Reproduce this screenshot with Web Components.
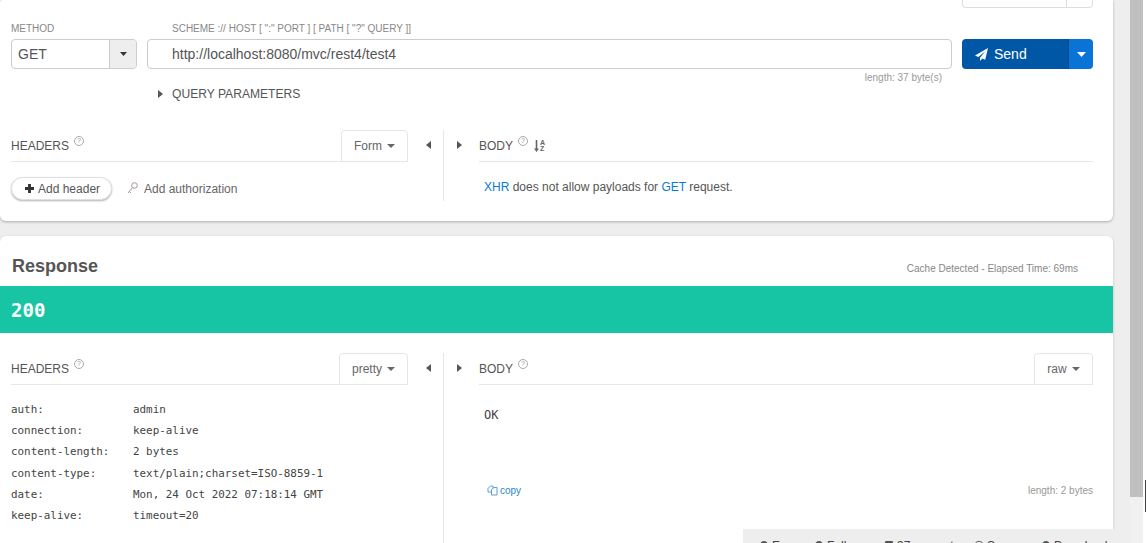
<!DOCTYPE html>
<html>
<head>
<meta charset="utf-8">
<title>API Tester</title>
<style>
html,body{margin:0;padding:0;height:100%;overflow:hidden;background:#fff;}
body{font-family:"Liberation Sans",Arial,sans-serif;color:#555;}
</style>
</head>
<body>
<api-app>
    <request-card></request-card>
    <response-card></response-card>
</api-app>

<script>
const caret = (w, h, color) => `<svg width="${w}" height="${h}" viewBox="0 0 8 4" preserveAspectRatio="none" style="display:block"><path d="M0 0h8L4 4z" fill="${color}"/></svg>`

class ApiApp extends HTMLElement{
    constructor(){
        super()
        this.attachShadow({mode: 'open'})
        this.shadowRoot.innerHTML = `
            <style>
                :host{display:flex;height:543px;width:1146px;overflow:hidden;position:relative;}
                #main{width:1130px;height:543px;background:#eee;overflow:hidden;flex:none;}
                #track{width:13px;background:#f1f1f1;flex:none;}
                #thumb{height:497px;background:#c0c0c0;}
                #edge{flex:1;background:#fff;}
                #mark{position:absolute;right:0;top:480px;width:1px;height:32px;background:#444;}
            </style>
            <div id="main"><slot></slot></div>
            <div id="track"><div id="thumb"></div></div>
            <div id="edge"></div>
            <div id="mark"></div>
            <status-bar></status-bar>
        `
    }
}

class HelpMark extends HTMLElement{
    constructor(){
        super()
        this.attachShadow({mode: 'open'})
        this.shadowRoot.innerHTML = `
            <style>
                :host{display:inline-flex;width:10px;height:10px;box-sizing:border-box;border:1px solid #aaa;border-radius:50%;
                    align-items:center;justify-content:center;font:7px/8px "Liberation Sans",sans-serif;color:#999;
                    position:relative;top:-5px;margin-left:5px;}
            </style>?
        `
    }
}

class Arrow extends HTMLElement{
    constructor(){
        super()
        this.attachShadow({mode: 'open'})
        const left = this.hasAttribute('left')
        this.shadowRoot.innerHTML = `
            <style>:host{display:block;width:5px;height:8px;line-height:0;}</style>
            <svg width="5" height="8" viewBox="0 0 5 8"><path d="${left ? 'M5 0v8L0 4z' : 'M0 0v8l5-4z'}" fill="#555"/></svg>
        `
    }
}

class PaneHead extends HTMLElement{
    constructor(){
        super()
        this.attachShadow({mode: 'open'})
        this.shadowRoot.innerHTML = `
            <style>
                :host{display:flex;align-items:stretch;height:32px;box-sizing:border-box;border-bottom:1px solid #e6e6e6;}
                #title{display:flex;align-items:center;font-size:12px;color:#555;flex:1;padding-top:1px;}
            </style>
            <div id="title"><span></span><help-mark></help-mark><slot name="extra"></slot></div>
            <slot name="tool"></slot>
        `
    }
    connectedCallback(){
        this.shadowRoot.querySelector('span').textContent = this.getAttribute('title')
    }
}

class TabPick extends HTMLElement{
    constructor(){
        super()
        this.attachShadow({mode: 'open'})
        this.shadowRoot.innerHTML = `
            <style>
                :host{display:flex;align-items:center;justify-content:center;gap:5px;box-sizing:border-box;height:32px;
                    border:1px solid #e6e6e6;border-bottom:1px solid #e6e6e6;border-radius:4px 4px 0 0;
                    font-size:12px;color:#666;}
            </style>
            <slot></slot>${caret(8, 4, '#666')}
        `
    }
}

class SplitPane extends HTMLElement{
    constructor(){
        super()
        this.attachShadow({mode: 'open'})
        this.shadowRoot.innerHTML = `
            <style>
                :host{display:flex;padding-left:11px;box-sizing:border-box;}
                #left{width:397px;flex:none;}
                #mid{width:71px;flex:none;display:flex;}
                #a{width:36px;box-sizing:border-box;border-right:1px solid #e6e6e6;padding:11px 0 0 18px;}
                #b{flex:1;padding:11px 0 0 13px;}
                #right{flex:1;}
            </style>
            <div id="left"><slot name="left"></slot></div>
            <div id="mid">
                <div id="a"><flip-arrow left></flip-arrow></div>
                <div id="b"><flip-arrow></flip-arrow></div>
            </div>
            <div id="right"><slot name="right"></slot></div>
        `
    }
}

class RequestCard extends HTMLElement{
    constructor(){
        super()
        this.attachShadow({mode: 'open'})
        this.shadowRoot.innerHTML = `
            <style>
                :host{display:block;height:221px;width:1113px;box-sizing:border-box;background:#fff;
                    border-radius:3px 0 6px 6px;box-shadow:0 1px 3px rgba(0,0,0,.28);}
                #stub-row{height:8px;display:flex;justify-content:flex-end;padding-right:20px;}
                #stub{width:131px;box-sizing:border-box;border:1px solid #ddd;border-top:0;border-radius:0 0 4px 4px;display:flex;justify-content:flex-end;}
                #stub i{display:block;width:25px;border-left:1px solid #ddd;}
                #labels{display:flex;height:31px;padding-left:11px;font-size:10px;line-height:11px;color:#888;}
                #labels span{padding-top:15px;}
                #labels span:first-child{width:161px;}
                #controls{display:flex;height:30px;padding:0 20px 0 11px;gap:10px;}
                #method{width:126px;box-sizing:border-box;border:1px solid #ccc;border-radius:4px;display:flex;font-size:14px;color:#555;overflow:hidden;}
                #method b{flex:1;font-weight:normal;line-height:28px;padding-left:6px;}
                #method i{width:27px;box-sizing:border-box;background:#eee;border-left:1px solid #ccc;display:flex;align-items:center;justify-content:center;}
                #url{flex:1;box-sizing:border-box;border:1px solid #ccc;border-radius:4px;font-size:14px;line-height:28px;padding-left:24px;color:#555;}
                #send{width:131px;display:flex;border-radius:4px;overflow:hidden;color:#fff;font-size:14px;}
                #send b{flex:1;background:#0057a6;font-weight:normal;display:flex;align-items:center;gap:6px;padding-left:13px;}
                #send i{width:25px;background:#0a74d6;border-left:1px solid #004a8e;box-sizing:border-box;display:flex;align-items:center;justify-content:center;}
                #length{font-size:10px;line-height:10px;color:#999;text-align:right;padding:4px 171px 0 0;}
                #query{display:flex;align-items:center;gap:9px;height:16px;margin:3px 0 0 158px;font-size:12.1px;color:#555;}
                split-pane{margin-top:28px;height:71px;padding-right:20px;}
                #tools{display:flex;align-items:center;height:23px;margin-top:15px;font-size:12px;color:#666;}
                #add{width:101px;height:23px;box-sizing:border-box;border:1px solid #e0e0e0;border-radius:12px;background:#fff;box-shadow:0 1px 2px rgba(0,0,0,.3);
                    display:flex;align-items:center;gap:4px;padding-left:13px;color:#555;}
                #auth{display:flex;align-items:center;gap:6px;margin-left:15px;}
                #msg{font-size:12px;color:#555;padding:18px 0 0 5px;}
                #msg a{color:#0a7ad1;}
                #sort{display:inline-flex;align-items:center;margin-left:6px;}
                #sort em{display:flex;flex-direction:column;font:bold 7px/6.500px "Liberation Sans",sans-serif;color:#666;margin-left:1px;}
            </style>
            <div id="stub-row"><div id="stub"><i></i></div></div>
            <div id="labels"><span>METHOD</span><span>SCHEME :// HOST [ ":" PORT ] [ PATH [ "?" QUERY ]]</span></div>
            <div id="controls">
                <div id="method"><b>GET</b><i>${caret(7, 4, '#333')}</i></div>
                <div id="url">http://localhost:8080/mvc/rest4/test4</div>
                <div id="send">
                    <b><svg width="13" height="13" viewBox="0 0 14 14"><path d="M14 0L0 8l3.6 1.6L11 3.4 5.4 10.4V14l2.5-2.7L11 12.700z" fill="#fff"/></svg>Send</b>
                    <i>${caret(9, 5, '#fff')}</i>
                </div>
            </div>
            <div id="length">length: 37 byte(s)</div>
            <div id="query"><flip-arrow></flip-arrow><span>QUERY PARAMETERS</span></div>
            <split-pane>
                <div slot="left">
                    <pane-head title="HEADERS"><tab-pick slot="tool" style="width:67px">Form</tab-pick></pane-head>
                    <div id="tools">
                        <div id="add"><svg width="9" height="9" viewBox="0 0 10 10"><path d="M3.400 0h3.200v3.400H10v3.200H6.600V10H3.400V6.600H0V3.400h3.400z" fill="#333"/></svg>Add header</div>
                        <div id="auth"><svg width="11" height="13" viewBox="0 0 11 13" fill="none" stroke="#a0958f"><circle cx="7.500" cy="3.500" r="2.800"/><path d="M5.500 5.500L1 11M2.500 9.500l1.500 1.500"/></svg>Add authorization</div>
                    </div>
                </div>
                <div slot="right">
                    <pane-head title="BODY">
                        <span slot="extra" id="sort">
                            <svg width="5" height="12" viewBox="0 0 5 12"><path d="M1.700 0h1.600v8.500H5L2.500 12 0 8.500h1.700z" fill="#666"/></svg>
                            <em><span>A</span><span>Z</span></em>
                        </span>
                    </pane-head>
                    <div id="msg"><a>XHR</a> does not allow payloads for <a>GET</a> request.</div>
                </div>
            </split-pane>
        `
    }
}

class ResponseCard extends HTMLElement{
    constructor(){
        super()
        this.attachShadow({mode: 'open'})
        const rows = [
            ['auth:', 'admin'],
            ['connection:', 'keep-alive'],
            ['content-length:', '2 bytes'],
            ['content-type:', 'text/plain;charset=ISO-8859-1'],
            ['date:', 'Mon, 24 Oct 2022 07:18:14 GMT'],
            ['keep-alive:', 'timeout=20']
        ]
        this.shadowRoot.innerHTML = `
            <style>
                :host{display:block;width:1113px;margin-top:15px;height:400px;background:#fff;border-radius:6px 6px 0 0;box-shadow:0 1px 3px rgba(0,0,0,.2);}
                #top{height:50px;display:flex;justify-content:space-between;padding:0 35px 0 12px;}
                h2{margin:0;font-size:18px;line-height:20px;padding-top:20px;color:#555;}
                #time{font-size:10px;line-height:10px;padding-top:28px;color:#888;}
                #status{height:47px;background:#17c5a5;color:#fff;font:bold 19px/48px "DejaVu Sans Mono",monospace;padding-left:11px;}
                split-pane{margin-top:20px;height:190px;padding-right:20px;}
                #rows{display:grid;grid-template-columns:122px 1fr;grid-auto-rows:21.200px;margin-top:14px;
                    font:10.900px/21px "DejaVu Sans Mono",monospace;color:#444;}
                #ok{font:12px/14px "DejaVu Sans Mono",monospace;color:#444;padding:23px 0 0 5px;height:67px;}
                #foot{display:flex;justify-content:space-between;align-items:center;font-size:10px;color:#999;margin-top:10px;padding-left:8px;}
                #copy{display:flex;align-items:center;gap:2px;color:#2a86cc;}
            </style>
            <div id="top"><h2>Response</h2><div id="time">Cache Detected - Elapsed Time: 69ms</div></div>
            <div id="status">200</div>
            <split-pane>
                <div slot="left">
                    <pane-head title="HEADERS"><tab-pick slot="tool" style="width:69px">pretty</tab-pick></pane-head>
                    <div id="rows">${rows.map(r => `<span>${r[0]}</span><span>${r[1]}</span>`).join('')}</div>
                </div>
                <div slot="right">
                    <pane-head title="BODY"><tab-pick slot="tool" style="width:59px">raw</tab-pick></pane-head>
                    <div id="ok">OK</div>
                    <div id="foot">
                        <span id="copy"><svg width="11" height="11" viewBox="0 0 11 11" fill="#fff" stroke="#5c9fd6"><path d="M1 3.500L3.500 1H6v6H1z"/><path d="M4.500 4.500L7 2.500h3v7.500H4.500z"/></svg>copy</span>
                        <span>length: 2 bytes</span>
                    </div>
                </div>
            </split-pane>
        `
    }
}

class StatusBar extends HTMLElement{
    constructor(){
        super()
        this.attachShadow({mode: 'open'})
        this.shadowRoot.innerHTML = `
            <style>
                :host{position:absolute;left:743px;top:529px;width:387px;height:14px;background:#eee;overflow:hidden;
                    font:12px/14px "Liberation Sans",sans-serif;color:#444;}
                #items{display:flex;padding:10px 0 0 17px;white-space:nowrap;}
                #items span{display:flex;align-items:flex-start;gap:4px;}
                i{display:block;width:8px;height:9px;border-radius:50%;background:#555;margin-top:2px;}
                i.sq{border-radius:1px;}
                i.lock{box-sizing:border-box;background:none;border:1px solid #666;border-radius:3px 3px 0 0;}
            </style>
            <div id="items">
                <span style="width:55px"><i></i>Errors</span>
                <span style="width:70px"><i></i>Follow</span>
                <span style="width:90px"><i class="sq"></i>37 requests</span>
                <span style="width:67px"><i class="lock"></i>Secure</span>
                <span><i></i>Download</span>
            </div>
        `
    }
}

customElements.define('help-mark', HelpMark)
customElements.define('flip-arrow', Arrow)
customElements.define('pane-head', PaneHead)
customElements.define('tab-pick', TabPick)
customElements.define('split-pane', SplitPane)
customElements.define('status-bar', StatusBar)
customElements.define('request-card', RequestCard)
customElements.define('response-card', ResponseCard)
customElements.define('api-app', ApiApp)
</script>
</body>
</html>
